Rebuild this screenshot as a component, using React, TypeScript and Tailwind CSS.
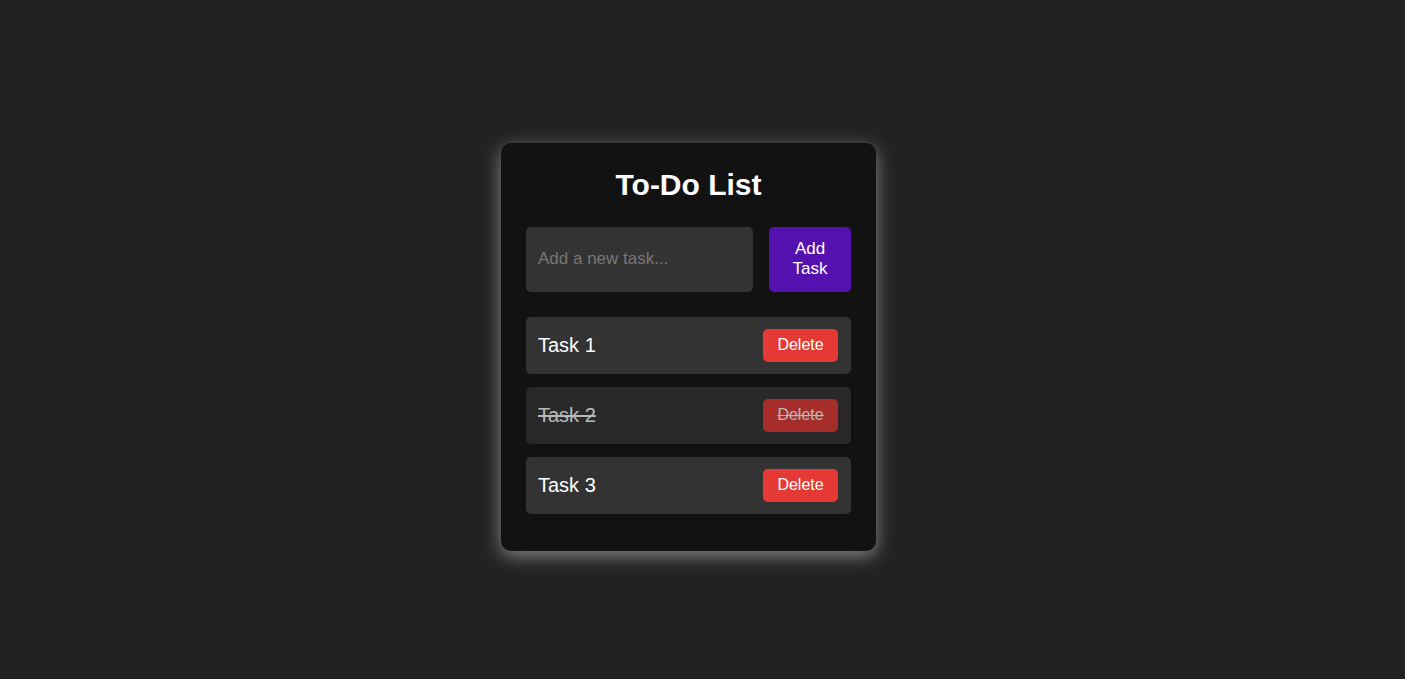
import React from "react";

const tasks = [
  { name: "Task 1", done: false },
  { name: "Task 2", done: true },
  { name: "Task 3", done: false },
];

export default function App() {
  return (
    <div
      className="min-h-screen w-full bg-[#222222] pt-[143px] pl-[501px]"
      style={{ fontFamily: '"Liberation Sans", Arial, sans-serif' }}
    >
      <div className="w-[375px] rounded-[10px] bg-[#121212] px-[25px] pt-[25px] pb-[37px] shadow-[0_5px_18px_rgba(255,255,255,0.45)]">
        <h1 className="mb-[25px] text-center text-[30px] font-bold leading-[34px] text-white">
          To-Do List
        </h1>
        <div className="mb-[25px] flex gap-4">
          <input
            type="text"
            placeholder="Add a new task..."
            className="h-[65px] min-w-0 flex-1 rounded-[5px] bg-[#333333] px-3 pb-[1px] text-[17px] text-white placeholder:text-[#777777] outline-none"
          />
          <button className="h-[65px] w-[82px] shrink-0 rounded-[5px] bg-[#5511b0] pb-[1px] text-[17px] leading-[20px] text-white">
            Add
            <br />
            Task
          </button>
        </div>
        <ul className="flex flex-col gap-[13px]">
          {tasks.map((t) => (
            <li
              key={t.name}
              className={`flex h-[57px] items-center justify-between rounded-[5px] bg-[#333333] pl-3 pr-[13px] ${
                t.done ? "opacity-70" : ""
              }`}
            >
              <span
                className={`-mt-[2px] text-[20px] text-white ${
                  t.done ? "line-through" : ""
                }`}
              >
                {t.name}
              </span>
              <button
                className={`h-[33px] w-[75px] rounded-[5px] bg-[#e53935] pb-[2px] text-[16px] text-white ${
                  t.done ? "line-through" : ""
                }`}
              >
                Delete
              </button>
            </li>
          ))}
        </ul>
      </div>
    </div>
  );
}
